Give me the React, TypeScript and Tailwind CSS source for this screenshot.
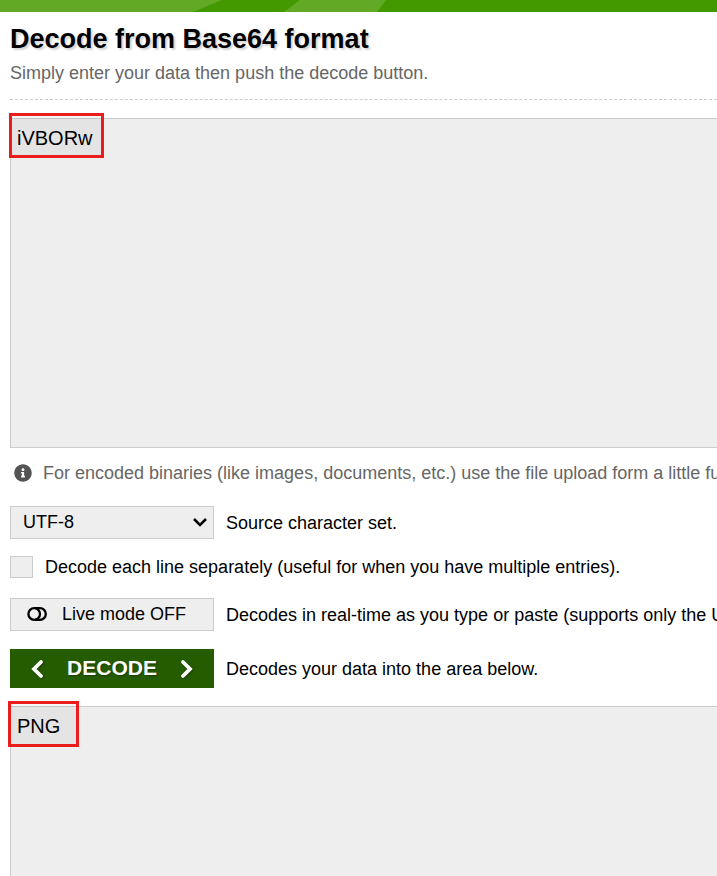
import React, { useState, FunctionComponent } from "react";
import { FaInfoCircle } from "react-icons/fa";

const Banner: FunctionComponent = () => (
  <svg className="block h-3 w-full bg-[#429a00]" aria-hidden="true">
    <polygon points="0,0 222,0 193,12 0,12" fill="#62a926" />
    <polygon points="300,0 386,0 377,12 284,12" fill="#62a926" />
  </svg>
);

const ToggleOffIcon: FunctionComponent = () => (
  <svg className="h-[14px] w-5" viewBox="0 0 20 14" fill="none" stroke="currentColor" strokeWidth="2.3" aria-hidden="true">
    <circle cx="7.2" cy="7" r="5.8" />
    <path d="M8 1.2h5a5.8 5.8 0 0 1 0 11.6H8" />
  </svg>
);

const Chevron: FunctionComponent<{ d: string }> = ({ d }) => (
  <svg
    className="h-5 w-[14px] drop-shadow-[1px_1px_1px_#1a3d00]"
    viewBox="0 0 14 20"
    fill="none"
    stroke="currentColor"
    strokeWidth="3.8"
    strokeLinecap="round"
    aria-hidden="true"
  >
    <path d={d} />
  </svg>
);

const App: FunctionComponent = () => {
  const [input, setInput] = useState("iVBORw");
  const [live, setLive] = useState(false);
  const [separate, setSeparate] = useState(false);

  return (
    <div className="flex min-h-screen flex-col overflow-hidden bg-white font-['Liberation_Sans',Arial,sans-serif] text-lg text-black">
      <Banner />
      <main className="flex flex-1 flex-col pl-[10px] whitespace-nowrap">
        <header className="border-b border-dashed border-[#cccccc] pt-[9px] pb-3">
          <h1 className="text-[27px] leading-9 font-bold [text-shadow:2px_2px_2px_#d4d4d4]">Decode from Base64 format</h1>
          <p className="pt-[2px] leading-7 text-[#666666]">Simply enter your data then push the decode button.</p>
        </header>

        <div className="relative mt-[18px]">
          <textarea
            aria-label="Encoded data"
            className="block h-[330px] w-full resize-none border border-r-0 border-[#cccccc] bg-[#eeeeee] px-[6px] py-[5px] text-xl leading-7 outline-none"
            value={input}
            onChange={(e) => setInput(e.target.value)}
          />
          <div className="pointer-events-none absolute -top-[5px] -left-px h-[45px] w-[95px] border-3 border-[#eb1c1c] bg-black/4" />
        </div>

        <p className="flex items-center gap-[11px] pt-[11px] pl-1 leading-7 text-[#666666]">
          <FaInfoCircle className="size-[18px] shrink-0 text-[#555555]" />
          For encoded binaries (like images, documents, etc.) use the file upload form a little fu
        </p>

        <div className="mt-[19px] flex items-center gap-3">
          <div className="relative shrink-0">
            <select
              id="charset"
              className="block h-[33px] w-[204px] appearance-none border border-[#cccccc] bg-[#eeeeee] pr-8 pb-[2px] pl-3 outline-none"
            >
              <option>UTF-8</option>
            </select>
            <svg className="pointer-events-none absolute top-3 right-[7px] h-[9px] w-[14px]" viewBox="0 0 14 9" fill="none" stroke="currentColor" strokeWidth="2.5" aria-hidden="true">
              <path d="M1 1l6 6 6-6" />
            </svg>
          </div>
          <label htmlFor="charset">Source character set.</label>
        </div>

        <div className="mt-[14px] flex items-center gap-3">
          <input
            id="separate"
            type="checkbox"
            className="h-[22px] w-[23px] shrink-0 appearance-none border border-[#cccccc] bg-[#eeeeee] checked:bg-[#265c00]"
            checked={separate}
            onChange={(e) => setSeparate(e.target.checked)}
          />
          <label htmlFor="separate">Decode each line separately (useful for when you have multiple entries).</label>
        </div>

        <div className="mt-[17px] flex items-center gap-3">
          <button
            type="button"
            className="flex h-[33px] w-[204px] shrink-0 items-center gap-[15px] border border-[#cccccc] bg-[#eeeeee] pb-[2px] pl-4"
            onClick={() => setLive(!live)}
          >
            <ToggleOffIcon />
            {live ? "Live mode ON" : "Live mode OFF"}
          </button>
          <span>Decodes in real-time as you type or paste (supports only the U</span>
        </div>

        <div className="mt-[18px] flex items-center gap-3">
          <button
            type="button"
            className="flex h-[39px] w-[204px] shrink-0 items-center justify-between bg-[#265c00] px-5 text-[21px] font-bold text-white [text-shadow:1px_1px_2px_#1a3d00]"
          >
            <Chevron d="M11 3L4 10l7 7" />
            DECODE
            <Chevron d="M3 3l7 7-7 7" />
          </button>
          <span>Decodes your data into the area below.</span>
        </div>

        <div className="relative mt-[18px] flex min-h-[170px] flex-1">
          <textarea
            aria-label="Decoded data"
            className="block w-full resize-none border border-r-0 border-b-0 border-[#cccccc] bg-[#eeeeee] px-[6px] py-[5px] text-xl leading-7 outline-none"
            defaultValue="PNG"
          />
          <div className="pointer-events-none absolute -top-[5px] -left-[2px] h-[46px] w-[71px] border-3 border-[#eb1c1c] bg-black/4" />
        </div>
      </main>
    </div>
  );
};

export default App;
